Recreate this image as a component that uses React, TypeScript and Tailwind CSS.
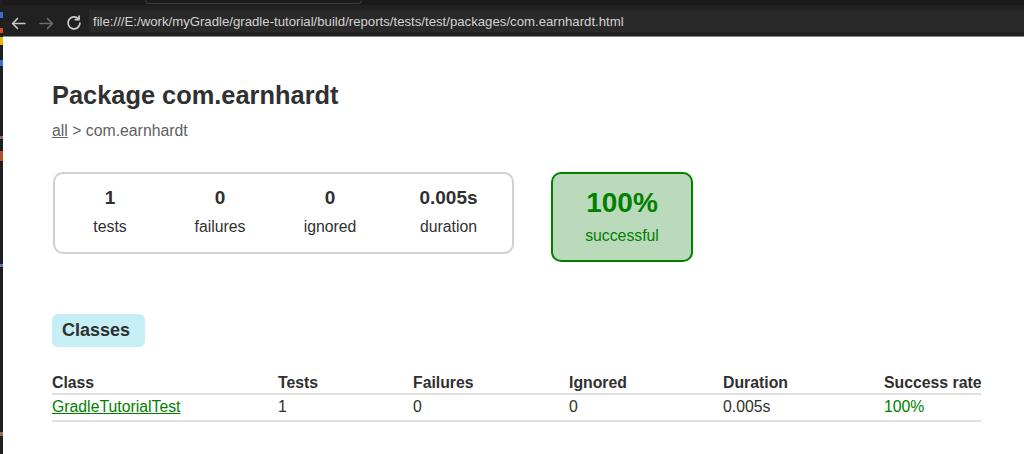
import React from "react";

function BackIcon({ color }: { color: string }) {
  return (
    <svg width="15" height="15" viewBox="0 0 14 14" fill="none" stroke={color} strokeWidth="1.5" strokeLinecap="round" strokeLinejoin="round">
      <path d="M13 7H1.5" />
      <path d="M6 2.5L1.5 7L6 11.5" />
    </svg>
  );
}

function ForwardIcon({ color }: { color: string }) {
  return (
    <svg width="15" height="15" viewBox="0 0 14 14" fill="none" stroke={color} strokeWidth="1.5" strokeLinecap="round" strokeLinejoin="round">
      <path d="M1 7H12.5" />
      <path d="M8 2.5L12.5 7L8 11.5" />
    </svg>
  );
}

function ReloadIcon() {
  return (
    <svg width="16" height="16" viewBox="0 0 15 15" fill="none" stroke="#cccccc" strokeWidth="1.6" strokeLinecap="round" strokeLinejoin="round">
      <path d="M11.6 3.6A5.6 5.6 0 1 0 13.1 7.5" />
      <path d="M12.2 1V4.4H8.8" />
    </svg>
  );
}

function Info({ value, label, w }: { value: string; label: string; w: string }) {
  return (
    <div className={`${w} flex flex-col items-center`}>
      <div className="text-[19px] leading-[22px] font-bold">{value}</div>
      <div className="mt-[9px] leading-[18px]">{label}</div>
    </div>
  );
}

export default function App() {
  const cols = "grid grid-cols-[226px_135px_156px_154px_161px_97px] whitespace-nowrap";
  return (
    <div className="w-[1024px] h-[454px] overflow-hidden flex bg-white font-['Liberation_Sans',Arial,sans-serif]">
      {/* left strip of window behind */}
      <div className="w-[3px] h-full shrink-0 bg-[#1f1f1f] flex flex-col">
        <div className="h-[12px]" />
        <div className="h-[6px] bg-[#3d6fcf]" />
        <div className="h-[10px]" />
        <div className="h-[5px] bg-[#d9501e]" />
        <div className="h-[4px]" />
        <div className="h-[8px] bg-[#e6b800]" />
        <div className="h-[15px]" />
        <div className="h-[6px] bg-[#3d6fcf]" />
        <div className="h-[70px]" />
        <div className="h-[3px] bg-[#8a6a5a]" />
        <div className="h-[12px]" />
        <div className="h-[10px] bg-[#b0502a]" />
        <div className="h-[103px]" />
        <div className="h-[3px] bg-[#5a7ab0]" />
        <div className="h-[165px]" />
        <div className="h-[4px] bg-[#9a6a5a]" />
      </div>

      <div className="flex-1 min-w-0 flex flex-col">
        {/* browser chrome */}
        <header className="h-[37px] shrink-0 bg-[#212121] border-b border-[#8a8a8a] flex flex-col">
          <div className="h-[5px] bg-[#1a1a1a]">
            <div className="ml-[142px] w-[217px] h-[4px] border border-t-0 border-[#3a3a3a] rounded-b-[4px]" />
          </div>
          <div className="flex items-start pt-[5px]">
            <div className="ml-[8px] mt-[6px]">
              <BackIcon color="#c8c8c8" />
            </div>
            <div className="ml-[13px] mt-[6px]">
              <ForwardIcon color="#6b6b6b" />
            </div>
            <div className="ml-[12px] mt-[5px]">
              <ReloadIcon />
            </div>
            <div className="ml-[7px] flex-1 h-[22px] bg-[#292929] flex items-center pl-[4px] pt-[1px] text-[13.2px] text-[#d2d2d2] whitespace-nowrap">
              file:///E:/work/myGradle/gradle-tutorial/build/reports/tests/test/packages/com.earnhardt.html
            </div>
          </div>
        </header>

        {/* page */}
        <main className="flex-1 pl-[48px] pt-[44px] text-[#303030] text-[15.8px] leading-[18px]">
          <h1 className="ml-[1px] text-[25.4px] leading-[29px] font-bold whitespace-nowrap">Package com.earnhardt</h1>
          <div className="mt-[12px] ml-[1px] text-[#606060]">
            <span className="underline">all</span> &gt; com.earnhardt
          </div>

          <div className="mt-[32px] flex items-start">
            <div className="ml-[2px] w-[461px] h-[82px] border-2 border-[#d0d0d0] rounded-[10px] flex pt-[13px]">
              <Info value="1" label="tests" w="w-[110px]" />
              <Info value="0" label="failures" w="w-[110px]" />
              <Info value="0" label="ignored" w="w-[110px]" />
              <Info value="0.005s" label="duration" w="w-[127px]" />
            </div>
            <div className="ml-[37px] w-[142px] h-[90px] border-2 border-[#008000] bg-[#bbd9bb] rounded-[10px] text-[#008000] flex flex-col items-center pt-[13px]">
              <div className="text-[28px] leading-[32px] font-bold">100%</div>
              <div className="mt-[8px] leading-[18px]">successful</div>
            </div>
          </div>

          <div className="mt-[52px] ml-[1px] w-[93px] h-[33px] bg-[#c5eff5] rounded-[6px] flex items-center pl-[10px] pb-[2px] text-[18px] font-bold">
            Classes
          </div>

          <div className="mt-[27px] ml-[1px] w-[929px]">
            <div className={`${cols} font-bold pb-[1px] border-b-2 border-[#e0e0e0]`}>
              <div>Class</div>
              <div>Tests</div>
              <div>Failures</div>
              <div>Ignored</div>
              <div>Duration</div>
              <div>Success rate</div>
            </div>
            <div className={`${cols} pt-[3px] pb-[4px] border-b-2 border-[#e0e0e0]`}>
              <div>
                <span className="text-[#008000] underline">GradleTutorialTest</span>
              </div>
              <div>1</div>
              <div>0</div>
              <div>0</div>
              <div>0.005s</div>
              <div className="text-[#008000]">100%</div>
            </div>
          </div>
        </main>
      </div>
    </div>
  );
}
